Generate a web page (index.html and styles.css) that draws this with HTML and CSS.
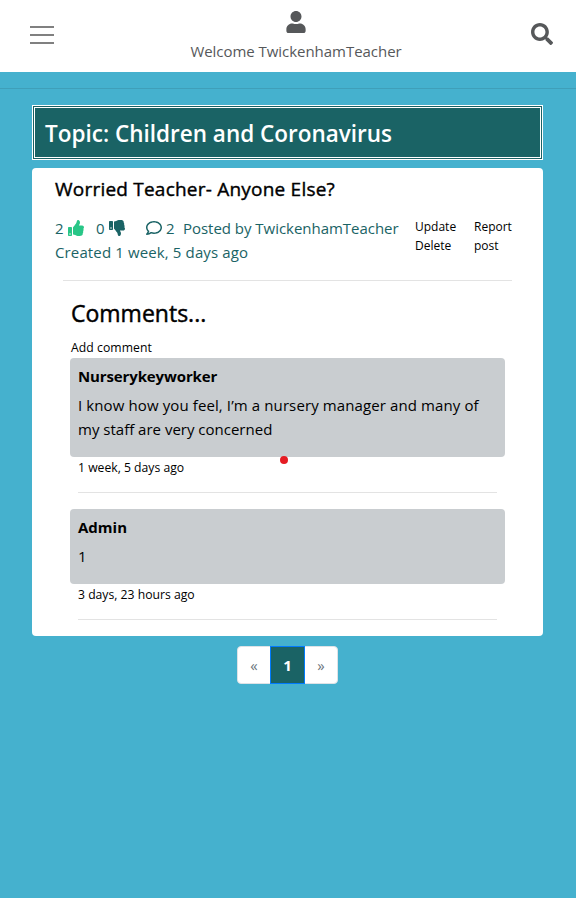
FILE: index.html
```html
<!DOCTYPE html>
<html lang="en">
<head>
<meta charset="utf-8">
<title>Children and Coronavirus</title>
<link rel="stylesheet" href="styles.css">
</head>
<body>
<header class="navbar">
  <div class="menu"><span></span><span></span><span></span></div>
  <div class="account">
    <svg class="user" viewBox="0 0 448 512"><path d="M224 256c70.7 0 128-57.3 128-128S294.7 0 224 0 96 57.3 96 128s57.3 128 128 128zm89.6 32h-16.7c-22.2 10.2-46.900 16-72.900 16s-50.600-5.800-72.900-16h-16.700C60.200 288 0 348.200 0 422.400V464c0 26.500 21.500 48 48 48h352c26.500 0 48-21.500 48-48v-41.600c0-74.200-60.200-134.400-134.400-134.400z"/></svg>
    <span class="welcome">Welcome TwickenhamTeacher</span>
  </div>
  <svg class="search" viewBox="0 0 512 512"><path d="M505 442.700L405.300 343c-4.500-4.500-10.600-7-17-7H372c27.600-35.300 44-79.700 44-128C416 93.100 322.900 0 208 0S0 93.100 0 208s93.100 208 208 208c48.300 0 92.700-16.400 128-44v16.300c0 6.400 2.500 12.500 7 17l99.700 99.700c9.400 9.400 24.600 9.400 33.900 0l28.300-28.300c9.400-9.400 9.400-24.600.1-34zM208 336c-70.700 0-128-57.200-128-128 0-70.700 57.200-128 128-128 70.700 0 128 57.200 128 128 0 70.700-57.200 128-128 128z"/></svg>
</header>
<hr class="divider">
<main>
  <h1><span>Topic: Children and Coronavirus</span></h1>
  <article class="card">
    <h2><span>Worried Teacher- Anyone Else?</span></h2>
    <div class="info">
      <div class="meta">
        <div class="stats">
          <span class="num">2</span>
          <svg class="icon up" viewBox="0 0 512 512"><path d="M104 224H24c-13.255 0-24 10.745-24 24v240c0 13.255 10.745 24 24 24h80c13.255 0 24-10.745 24-24V248c0-13.255-10.745-24-24-24zM64 472c-13.255 0-24-10.745-24-24s10.745-24 24-24 24 10.745 24 24-10.745 24-24 24zM384 81.452c0 42.416-25.970 66.208-33.277 94.548h101.723c33.397 0 59.397 27.746 59.553 58.098.084 17.938-7.546 37.249-19.439 49.197l-.110.110c9.836 23.337 8.237 56.037-9.308 79.469 8.681 25.895-.069 57.704-16.382 74.757 4.298 17.598 2.244 32.575-6.148 44.632C440.202 511.587 389.616 512 346.839 512l-2.845-.001c-48.287-.017-87.806-17.598-119.560-31.725-15.957-7.099-36.821-15.887-52.651-16.178-6.540-.120-11.783-5.457-11.783-11.998v-213.770c0-3.200 1.282-6.271 3.558-8.521 39.614-39.144 56.648-80.587 89.117-113.111 14.804-14.832 20.188-37.236 25.393-58.902C282.515 39.293 291.817 0 312 0c24 0 72 8 72 81.452z"/></svg>
          <span class="num down-count">0</span>
          <svg class="icon" viewBox="0 0 512 512"><path d="M0 56v240c0 13.255 10.745 24 24 24h80c13.255 0 24-10.745 24-24V56c0-13.255-10.745-24-24-24H24C10.745 32 0 42.745 0 56zm40 200c0-13.255 10.745-24 24-24s24 10.745 24 24-10.745 24-24 24-24-10.745-24-24zm272 256c-20.183 0-29.485-39.293-33.931-57.795-5.206-21.666-10.589-44.070-25.393-58.902-32.469-32.524-49.503-73.967-89.117-113.111a11.980 11.980 0 0 1-3.558-8.521V59.901c0-6.541 5.243-11.878 11.783-11.998 15.831-.290 36.694-9.079 52.651-16.178C256.189 17.598 295.709.017 343.995 0h2.844c42.777 0 93.363.413 113.774 29.737 8.392 12.057 10.446 27.034 6.148 44.632 16.312 17.053 25.063 48.863 16.382 74.757 17.544 23.432 19.143 56.132 9.308 79.469l.110.110c11.893 11.949 19.523 31.259 19.439 49.197-.156 30.352-26.157 58.098-59.553 58.098H350.723C358.030 364.340 384 388.132 384 430.548 384 504 336 512 312 512z"/></svg>
          <svg class="icon bubble" viewBox="0 0 512 512"><path d="M256 32C114.600 32 0 125.100 0 240c0 47.600 19.900 91.200 52.900 126.300C38 405.700 7 439.100 6.500 439.500c-6.600 7-8.400 17.200-4.600 26S14.400 480 24 480c61.500 0 110-25.700 139.100-46.300C192 442.800 223.200 448 256 448c141.400 0 256-93.100 256-208S397.400 32 256 32zm0 368c-26.700 0-53.100-4.100-78.400-12.100l-22.700-7.200-19.500 13.800c-14.300 10.100-33.900 21.400-57.500 29 7.300-12.100 14.400-25.700 19.900-40.200l10.600-28.100-20.600-21.800C69.700 314.100 48 282.200 48 240c0-88.200 93.300-160 208-160s208 71.800 208 160-93.300 160-208 160z"/></svg>
          <span class="num">2</span>
          <span class="author">Posted by TwickenhamTeacher</span>
        </div>
        <div><span class="created">Created 1 week, 5 days ago</span></div>
      </div>
      <div class="links edit"><a>Update</a><a>Delete</a></div>
      <div class="links"><a>Report</a><a>post</a></div>
    </div>
    <hr class="rule">
    <section class="comments">
      <h3><span>Comments...</span></h3>
      <a class="add">Add comment</a>
      <div class="comment">
        <h4><span class="name">Nurserykeyworker</span></h4>
        <p><span class="line-a">I know how you feel, I’m a nursery manager and many of</span><br><span>my staff are very concerned</span></p>
        <i class="dot"></i>
      </div>
      <time>1 week, 5 days ago</time>
      <hr class="sep">
      <div class="comment">
        <h4><span>Admin</span></h4>
        <p>1</p>
      </div>
      <time>3 days, 23 hours ago</time>
      <hr class="sep">
    </section>
  </article>
  <nav class="pages"><a class="prev">«</a><a class="current">1</a><a class="next">»</a></nav>
</main>
</body>
</html>
```
FILE: styles.css
```css
* { box-sizing: border-box; }
body {
  margin: 0;
  min-height: 898px;
  background: #45b1ce;
  color: #000;
  font: 15px/24px "Open Sans", "Noto Sans", sans-serif;
}
h1, h2, h3, h4, p { margin: 0; }
hr { border: 0; height: 1px; margin: 0; }
svg { display: block; flex: none; }
a, time { display: block; white-space: nowrap; }
span { white-space: nowrap; }

.navbar {
  height: 72px;
  padding: 0 23px 0 30px;
  background: #fff;
  color: #56585a;
  display: grid;
  grid-template-columns: 24px 1fr 22px;
}
.menu { display: grid; gap: 6px; align-content: start; padding-top: 26px; }
.menu span { height: 2px; background: #808080; }
.account { display: flex; flex-direction: column; align-items: center; padding: 11px 0 0 7px; }
.user { width: 20px; height: 22px; fill: #56585a; margin-bottom: 6px; }
.welcome { letter-spacing: -.04px; }
.search { width: 22px; height: 22px; fill: #56585a; margin-top: 23px; }

.divider { margin-top: 16px; background: #3f9fb9; }
main { padding: 16px 33px 0 32px; }
h1 {
  height: 55px;
  border: 3px double #fff;
  background: #1a6365;
  color: #fff;
  padding: 0 10px;
  font-size: 22.5px;
  font-weight: 600;
  line-height: 52px;
}
.card { margin-top: 8px; height: 468px; background: #fff; border-radius: 4px; padding: 9px 31px 0 23px; }
h2 { font-size: 19px; font-weight: 400; line-height: 24px; letter-spacing: .22px; -webkit-text-stroke: .4px #000; }
.info { display: flex; margin-top: 15px; height: 64px; color: #1a6365; }
.meta { width: 360px; }
.stats { display: flex; align-items: center; height: 24px; }
.num { width: 9px; }
.icon { width: 16px; height: 16px; fill: #1a6365; margin: 0 4px; }
.up { fill: #28c687; }
.down-count { margin-left: 8px; }
.bubble { margin: 0 4px 0 17px; }
.author { margin-left: 8px; letter-spacing: -.03px; }
.created { letter-spacing: .13px; }
.links { color: #000; font-size: 12px; line-height: 19px; padding-top: 1px; }
.edit { width: 59px; }
.rule { margin-left: 8px; background: #e3e3e3; }
.comments { padding: 18px 7px 0 15px; }
h3 { font-size: 23px; font-weight: 400; line-height: 29px; padding-left: 1px; -webkit-text-stroke: .45px #000; }
.add { font-size: 12.2px; line-height: 19px; margin-top: 10px; padding-left: 1px; letter-spacing: .06px; }
.comment { position: relative; background: #c9cdd0; border-radius: 4px; padding: 9px 8px 16px; margin-top: 1px; }
.comment h4 { font-size: 15px; font-weight: 700; line-height: 19px; margin-bottom: 7px; }
.name { letter-spacing: -.12px; }
.line-a { letter-spacing: .11px; }
.dot { position: absolute; left: 210px; bottom: -7px; width: 8px; height: 8px; border-radius: 50%; background: #e51c23; }
time { font-size: 12.2px; line-height: 19px; padding: 1px 0 0 8px; }
.sep { margin: 15px 8px 16px; background: #e3e3e3; }

.pages { display: flex; width: 101px; height: 38px; margin: 10px auto 0 205px; background: #fff; border: 1px solid #dee2e6; border-radius: 4px; color: #6c757d; text-align: center; line-height: 37px; }
.prev, .next { width: 32px; }
.current { width: 35px; height: 38px; margin-top: -1px; background: #1a6365; border: 1px solid #007bff; color: #fff; font-weight: 700; }
```
